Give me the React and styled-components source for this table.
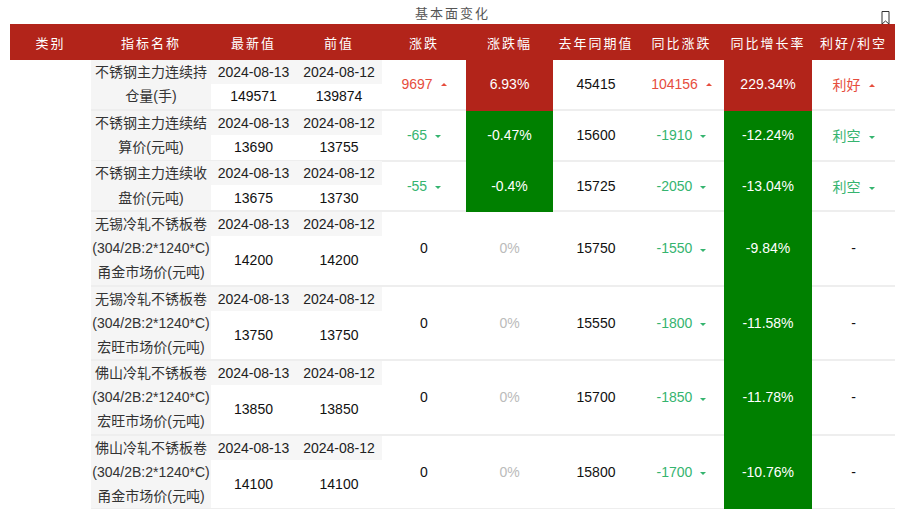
import React from 'react'
import styled, { createGlobalStyle, css } from 'styled-components'

const RED = '#b2241a'
const GREEN = '#008000'
const TXT_RED = '#e64d3d'
const TXT_GREEN = '#35b46f'

const GlobalStyle = createGlobalStyle`
  html, body {
    margin: 0;
    padding: 0;
    background: #fff;
  }
  body {
    font-family: "Liberation Sans", "Noto Sans CJK SC", sans-serif;
  }
`

const Page = styled.div`
  position: relative;
  width: 906px;
  padding: 0 11px 0 10px;
  box-sizing: border-box;
`

const Title = styled.div`
  height: 24px;
  line-height: 25px;
  text-align: center;
  font-family: "Noto Sans CJK SC", sans-serif;
  font-size: 13px;
  letter-spacing: 2px;
  color: #555;
`

const Bookmark = styled.svg`
  position: absolute;
  top: 11px;
  right: 16px;
`

const COLS = '81px 120px 85px 86px 84px 87px 86px 85px 88px 83px'

const HeadRow = styled.div`
  display: grid;
  grid-template-columns: ${COLS};
  height: 36px;
  background: ${RED};
`

const HeadCell = styled.div`
  display: flex;
  align-items: center;
  justify-content: center;
  color: #fff;
  font-family: "Noto Sans CJK SC", sans-serif;
  font-size: 13px;
  letter-spacing: 2px;
  white-space: nowrap;
`

const Row = styled.div`
  display: grid;
  grid-template-columns: ${COLS};
  height: ${p => p.$h}px;
`

const Cell = styled.div`
  display: flex;
  align-items: center;
  justify-content: center;
  box-sizing: border-box;
  border-bottom: 2px solid #eeeeee;
  font-size: 14px;
  color: #111;
  white-space: nowrap;
  ${p => p.$bg && css`
    background: ${p.$bg};
    color: #fff;
    border-bottom-color: transparent;
  `}
`

const Blank = styled.div``

const NameCell = styled(Cell)`
  flex-direction: column;
  background: #f5f5f5;
  color: #333;
  line-height: ${p => p.$lh}px;
`

const DateCell = styled(Cell)`
  flex-direction: column;
  align-items: stretch;
`

const DateLine = styled.div`
  height: 24px;
  line-height: 24px;
  text-align: center;
  background: #f6f6f6;
  color: #222;
`

const ValueLine = styled.div`
  flex: 1;
  display: flex;
  align-items: center;
  justify-content: center;
`

const Trend = styled.span`
  color: ${p => (p.$dir === 'up' ? TXT_RED : p.$dir === 'down' ? TXT_GREEN : '#111')};
`

const Muted = styled.span`
  color: #bbb;
`

const Arrow = styled.i`
  display: inline-block;
  width: 0;
  height: 0;
  margin-left: 8px;
  vertical-align: middle;
  border-left: 3px solid transparent;
  border-right: 3px solid transparent;
  ${p => p.$dir === 'up'
    ? css`border-bottom: 3px solid ${TXT_RED}; margin-top: -2px;`
    : css`border-top: 3px solid ${TXT_GREEN}; margin-top: 1px;`}
`

const headers = ['类别', '指标名称', '最新值', '前值', '涨跌', '涨跌幅', '去年同期值', '同比涨跌', '同比增长率', '利好/利空']

const rows = [
  {
    name: ['不锈钢主力连续持', '仓量(手)'], v1: '149571', v2: '139874',
    chg: ['9697', 'up'], pct: ['6.93%', RED], last: '45415',
    yoy: ['104156', 'up'], yoyPct: ['229.34%', RED], signal: ['利好', 'up'],
  },
  {
    name: ['不锈钢主力连续结', '算价(元吨)'], v1: '13690', v2: '13755',
    chg: ['-65', 'down'], pct: ['-0.47%', GREEN], last: '15600',
    yoy: ['-1910', 'down'], yoyPct: ['-12.24%', GREEN], signal: ['利空', 'down'],
  },
  {
    name: ['不锈钢主力连续收', '盘价(元吨)'], v1: '13675', v2: '13730',
    chg: ['-55', 'down'], pct: ['-0.4%', GREEN], last: '15725',
    yoy: ['-2050', 'down'], yoyPct: ['-13.04%', GREEN], signal: ['利空', 'down'],
  },
  {
    name: ['无锡冷轧不锈板卷', '(304/2B:2*1240*C)', '甬金市场价(元吨)'], v1: '14200', v2: '14200',
    chg: ['0'], pct: ['0%'], last: '15750',
    yoy: ['-1550', 'down'], yoyPct: ['-9.84%', GREEN], signal: ['-'],
  },
  {
    name: ['无锡冷轧不锈板卷', '(304/2B:2*1240*C)', '宏旺市场价(元吨)'], v1: '13750', v2: '13750',
    chg: ['0'], pct: ['0%'], last: '15550',
    yoy: ['-1800', 'down'], yoyPct: ['-11.58%', GREEN], signal: ['-'],
  },
  {
    name: ['佛山冷轧不锈板卷', '(304/2B:2*1240*C)', '宏旺市场价(元吨)'], v1: '13850', v2: '13850',
    chg: ['0'], pct: ['0%'], last: '15700',
    yoy: ['-1850', 'down'], yoyPct: ['-11.78%', GREEN], signal: ['-'],
  },
  {
    name: ['佛山冷轧不锈板卷', '(304/2B:2*1240*C)', '甬金市场价(元吨)'], v1: '14100', v2: '14100',
    chg: ['0'], pct: ['0%'], last: '15800',
    yoy: ['-1700', 'down'], yoyPct: ['-10.76%', GREEN], signal: ['-'],
  },
]

const TrendValue = ({ value, dir }) => (
  <Trend $dir={dir}>
    {value}
    {dir && <Arrow $dir={dir} />}
  </Trend>
)

const DataRow = ({ row }) => {
  const three = row.name.length === 3
  return (
    <Row $h={three ? 74.5 : 50.7}>
      <Blank />
      <NameCell $lh={three ? 24.2 : 24.4}>
        {row.name.map(line => <span key={line}>{line}</span>)}
      </NameCell>
      <DateCell>
        <DateLine>2024-08-13</DateLine>
        <ValueLine>{row.v1}</ValueLine>
      </DateCell>
      <DateCell>
        <DateLine>2024-08-12</DateLine>
        <ValueLine>{row.v2}</ValueLine>
      </DateCell>
      <Cell><TrendValue value={row.chg[0]} dir={row.chg[1]} /></Cell>
      <Cell $bg={row.pct[1]}>
        {row.pct[1] ? row.pct[0] : <Muted>{row.pct[0]}</Muted>}
      </Cell>
      <Cell>{row.last}</Cell>
      <Cell><TrendValue value={row.yoy[0]} dir={row.yoy[1]} /></Cell>
      <Cell $bg={row.yoyPct[1]}>{row.yoyPct[0]}</Cell>
      <Cell><TrendValue value={row.signal[0]} dir={row.signal[1]} /></Cell>
    </Row>
  )
}

const App = () => (
  <Page>
    <GlobalStyle />
    <Title>基本面变化</Title>
    <Bookmark width="9" height="14" viewBox="0 0 9 14">
      <path d="M1 0.5 H8 V13 L4.5 10 L1 13 Z" fill="#fff" stroke="#333" strokeWidth="1" />
    </Bookmark>
    <HeadRow>
      {headers.map(h => <HeadCell key={h}>{h}</HeadCell>)}
    </HeadRow>
    {rows.map((row, i) => <DataRow key={i} row={row} />)}
  </Page>
)

export default App
